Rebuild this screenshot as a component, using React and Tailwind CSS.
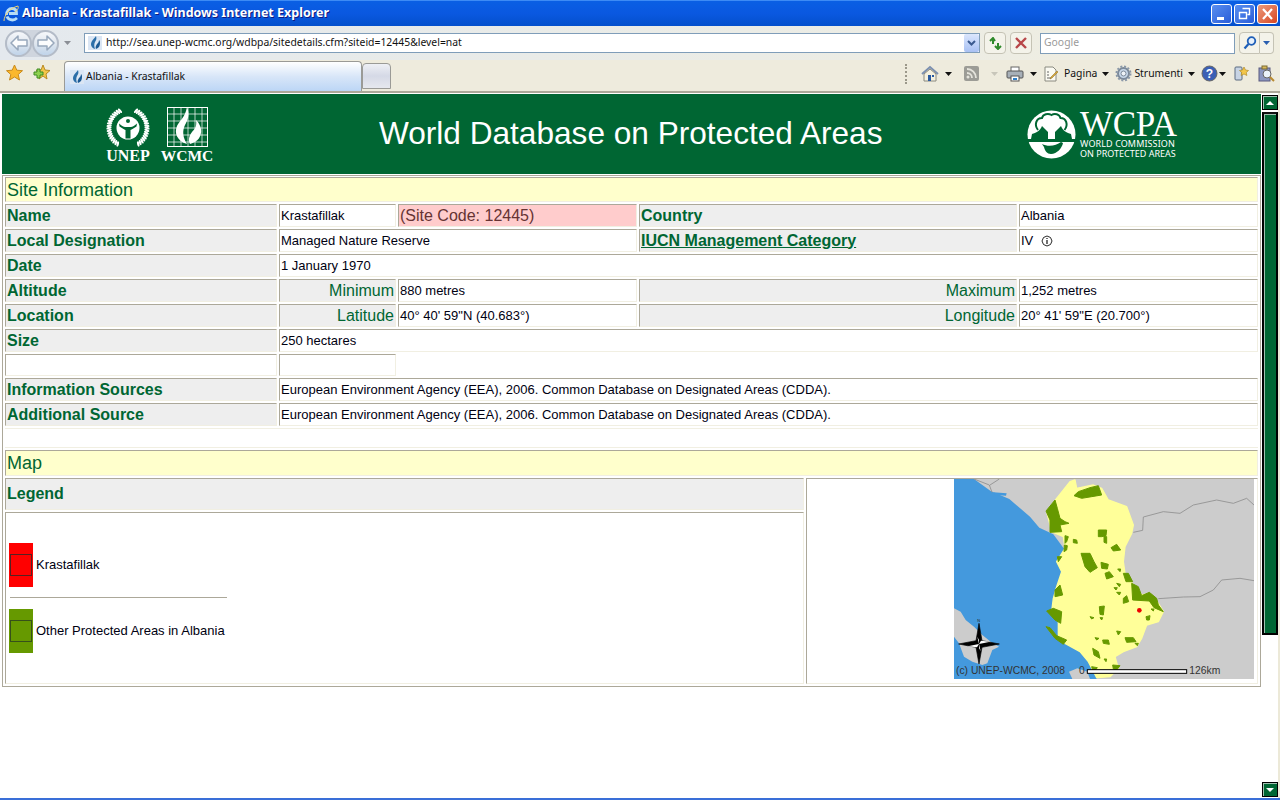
import React from "react";

const inset = "border border-t-[#aca899] border-l-[#aca899] border-r-[#f1efe2] border-b-[#f1efe2]";
const labelCell = `${inset} bg-[#eeeeee] text-[16px] font-bold text-[#006633] pl-px flex items-center h-[23px] leading-none whitespace-nowrap`;
const valueCell = `${inset} bg-white text-[13px] text-[#000011] pl-px flex items-center h-[23px] whitespace-nowrap`;
const subCell = `${inset} bg-[#eeeeee] text-[16px] text-[#006633] pr-px flex items-center justify-end h-[23px] leading-none whitespace-nowrap`;
const headCell = `${inset} bg-[#ffffcc] text-[18px] text-[#006633] pl-px flex items-center leading-none`;
const rowGrid = "grid grid-cols-[272px_117px_239px_378px_239px] gap-x-[2px]";

function Fav({ className = "" }) {
  return (
    <svg width="14" height="14" viewBox="0 0 14 14" className={className}>
      <rect width="14" height="14" fill="#dbe6f4" />
      <path d="M7 13C3 12 2 8 4 5c1-2 3-3 4-5 1 3 0 4-1 6-1 2-1 4 0 7z" fill="#2b6ea8" />
      <path d="M8 13c3-1 4-3 4-6 0-1 0-2-1-3 0 2-1 3-2 4-1 2-2 3-1 5z" fill="#1b5a94" />
    </svg>
  );
}
function Arrow({ c = "#222", w = 7 }) {
  return <svg width={w} height="4" viewBox="0 0 7 4"><path d="M0 0h7L3.500 4z" fill={c} /></svg>;
}
function NavBtn({ dir, color = "#98a8bc" }) {
  return (
    <div className="w-[27px] h-[27px] rounded-full border-2 border-[#b4bcc8] bg-gradient-to-b from-[#f6f8fb] via-[#dfe6ee] to-[#c0d4ea] flex items-center justify-center">
      <svg width="18" height="16" viewBox="0 0 18 16">
        {dir === "l"
          ? <path d="M1 8l7-7v4h9v6H8v4z" fill="#fbfcfd" stroke={color} strokeWidth="1.500" strokeLinejoin="round" />
          : <path d="M17 8l-7-7v4H1v6h9v4z" fill="#fbfcfd" stroke={color} strokeWidth="1.500" strokeLinejoin="round" />}
      </svg>
    </div>
  );
}
function WinBtn({ bg, children }) {
  return (
    <div className={`w-[21px] h-[20px] rounded-[3px] border border-white flex items-center justify-center ${bg}`}>
      <svg width="15" height="14" viewBox="0 0 15 14">{children}</svg>
    </div>
  );
}
function Star({ plus }) {
  if (plus)
    return (
      <svg width="18" height="17" viewBox="0 0 18 17">
        <path d="M10 1l2 5 5 .5-4 3.500 1 5-4-3-4 3 1-5-4-3.500 5-.5z" fill="#f3c64a" stroke="#b98a22" />
        <path d="M4 5h3v3h3v3H7v3H4v-3H1V8h3z" fill="#8fd14f" stroke="#3f8a24" />
      </svg>
    );
  return (
    <svg width="17" height="17" viewBox="0 0 17 17">
      <path d="M8.500 1l2.300 5.200 5.700.5-4.300 3.800 1.300 5.500-5-3-5 3 1.300-5.500L.500 6.700l5.700-.5z" fill="#fbb82c" stroke="#c98a1a" />
    </svg>
  );
}

function Chrome() {
  return (
    <>
      <div className="h-[26px] bg-gradient-to-b from-[#0a5fe4] via-[#0a58e0] to-[#0450cc] border-t border-[#3d8bf5] flex items-center pl-[3px] pr-[2px] shrink-0">
        <svg width="17" height="18" viewBox="0 0 17 18">
          <path d="M3.500 10c0-4 2.500-6.500 5.500-6.500s4.500 2 4.500 5H6m-2 3c1 2.500 3 3.500 5.500 3.500 2 0 3.500-1 4.500-2" fill="none" stroke="#b4dcf8" strokeWidth="2.800" />
          <path d="M1 16C1 10 7 3 15 1c1 2-1 5-3 6" fill="none" stroke="#f3d36b" strokeWidth="1" />
        </svg>
        <span className="ml-[2px] text-white font-bold text-[12.500px] font-['Noto_Sans',sans-serif] [text-shadow:1px_1px_#0f1a80] whitespace-nowrap">Albania - Krastafillak - Windows Internet Explorer</span>
        <div className="ml-auto flex gap-[2px]">
          <WinBtn bg="bg-gradient-to-br from-[#5a8ff0] to-[#2a5cd8]"><rect x="3" y="10" width="7" height="3" fill="#fff" /></WinBtn>
          <WinBtn bg="bg-gradient-to-br from-[#5a8ff0] to-[#2a5cd8]"><path d="M5.500 1.500h7v6h-2M2.500 5.500h7v6h-7z" fill="none" stroke="#fff" strokeWidth="1.400" /></WinBtn>
          <WinBtn bg="bg-gradient-to-br from-[#ea9a7c] to-[#d6431c]"><path d="M3 2l9 10M12 2L3 12" stroke="#fff" strokeWidth="2.200" /></WinBtn>
        </div>
      </div>

      <div className="h-[34px] bg-gradient-to-r from-[#e4e9ee] to-[#f0eee0] flex items-center pl-[5px] shrink-0 font-['Noto_Sans',sans-serif]">
        <div className="flex bg-[#cfd5de] rounded-full">
          <NavBtn dir="l" /><NavBtn dir="r" />
        </div>
        <div className="ml-[5px]"><Arrow c="#8b8f96" /></div>
        <div className="ml-[13px] w-[896px] h-[20px] bg-white border border-[#7f9db9] flex items-center pl-[3px]">
          <Fav />
          <span className="ml-[4px] text-[10.400px] text-[#111] whitespace-nowrap">http://sea.unep-wcmc.org/wdbpa/sitedetails.cfm?siteid=12445&amp;level=nat</span>
          <div className="ml-auto w-[15px] h-[18px] bg-gradient-to-b from-[#dbe6fc] to-[#a8c1f4] rounded-[2px] flex items-center justify-center">
            <svg width="9" height="6" viewBox="0 0 9 6"><path d="M1 1l3.500 3.500L8 1" fill="none" stroke="#3a5a90" strokeWidth="2" /></svg>
          </div>
        </div>
        <div className="ml-[4px] w-[22px] h-[22px] rounded-[4px] border border-[#c5c3b5] bg-[#f4f3ea] flex items-center justify-center">
          <svg width="15" height="13" viewBox="0 0 15 13"><path d="M5 1v6M2 4l3-3 2 3M10 12V6M7 9l3 3 3-3" fill="none" stroke="#2f8a2b" strokeWidth="2" /></svg>
        </div>
        <div className="ml-[4px] w-[22px] h-[22px] rounded-[4px] border border-[#c5c3b5] bg-[#f4f3ea] flex items-center justify-center">
          <svg width="12" height="12" viewBox="0 0 12 12"><path d="M1 1l10 10M11 1L1 11" stroke="#b8474a" strokeWidth="2.400" /></svg>
        </div>
        <div className="ml-[8px] w-[195px] h-[21px] bg-white border border-[#7f9db9] flex items-center pl-[3px] text-[10.400px] text-[#9a9a9a]">Google</div>
        <div className="ml-[4px] w-[21px] h-[22px] rounded-l-[4px] border border-[#c5c3b5] bg-[#f4f3ea] flex items-center justify-center">
          <svg width="14" height="14" viewBox="0 0 14 14"><circle cx="8.500" cy="5" r="3.800" fill="#e6f0fb" stroke="#1f5fb8" strokeWidth="1.800" /><path d="M5.500 8L1.500 12.500" stroke="#1f5fb8" strokeWidth="2.200" /></svg>
        </div>
        <div className="w-[14px] h-[22px] rounded-r-[4px] border border-l-0 border-[#c5c3b5] bg-[#f4f3ea] flex items-center justify-center"><Arrow c="#2a5fb0" /></div>
      </div>

      <div className="h-[31px] bg-[#eeebdd] flex items-end pl-[6px] shrink-0 relative font-['Noto_Sans',sans-serif] text-[10.400px] text-[#111]">
        <div className="flex items-center self-center gap-[10px] w-[58px] mt-[-7px]">
          <Star /><Star plus />
        </div>
        <div className="w-[298px] h-[30px] rounded-t-[4px] border border-b-0 border-[#9a9a96] bg-gradient-to-b from-[#ffffff] via-[#d8e6f8] to-[#bcd6f6] flex items-center pl-[5px] gap-[2px] mt-[1px]">
          <Fav /> <span>Albania - Krastafillak</span>
        </div>
        <div className="w-[29px] h-[26px] mb-[2px] rounded-t-[4px] border border-[#9a9a96] bg-gradient-to-b from-[#eef0f5] via-[#d5d9e6] to-[#e6e8ee]" />
        <div className="self-center ml-auto flex items-center mt-[-4px] h-[20px] pr-[5px]">
          <div className="w-px h-[20px] border-l-2 border-dotted border-[#9b988a] mr-[14px]" />
          <svg width="18" height="17" viewBox="0 0 18 17"><path d="M1 9l8-7 8 7" fill="none" stroke="#7c90b0" strokeWidth="2" /><path d="M3 9v7h12V9L9 4z" fill="#f5f1df" stroke="#8a8a80" /><rect x="7" y="10" width="3" height="6" fill="#2a5aa0" /><rect x="11" y="10" width="2" height="2" fill="#2a5aa0" /></svg>
          <div className="ml-[6px]"><Arrow c="#111" /></div>
          <svg className="ml-[12px]" width="15" height="15" viewBox="0 0 15 15"><rect width="15" height="15" rx="2" fill="#9c9c96" /><path d="M3 3a9 9 0 0 1 9 9M3 7a5 5 0 0 1 5 5" fill="none" stroke="#e5e4dc" strokeWidth="1.800" /><circle cx="4" cy="11" r="1.500" fill="#e5e4dc" /></svg>
          <div className="ml-[12px]"><Arrow c="#c8c6ba" /></div>
          <svg className="ml-[8px]" width="18" height="16" viewBox="0 0 18 16"><rect x="5" y="1" width="8" height="5" fill="#fff" stroke="#666" /><rect x="1" y="5" width="16" height="7" rx="1" fill="#a8b0b8" stroke="#555" /><rect x="5" y="10" width="8" height="5" fill="#fff" stroke="#555" /><rect x="7" y="12" width="4" height="2" fill="#2f7fc8" /></svg>
          <div className="ml-[6px]"><Arrow c="#111" /></div>
          <svg className="ml-[6px]" width="16" height="16" viewBox="0 0 16 16"><path d="M2 1h8l3 3v11H2z" fill="#fbfaf2" stroke="#8a8a80" /><path d="M4 6h2M4 9h2M4 12h4" stroke="#666" /><path d="M8 11l6-6 1 1-6 6-2 1z" fill="#d8a83a" stroke="#8a6a20" strokeWidth=".5" /></svg>
          <span className="ml-[5px]">Pagina</span>
          <div className="ml-[5px]"><Arrow c="#111" /></div>
          <svg className="ml-[6px]" width="17" height="17" viewBox="0 0 17 17"><circle cx="8.500" cy="8.500" r="5.500" fill="#c8d8ea" stroke="#7c8a9a" strokeWidth="2" /><circle cx="8.500" cy="8.500" r="7" fill="none" stroke="#8a98a8" strokeWidth="2" strokeDasharray="2 1.700" /><circle cx="8.500" cy="8.500" r="2.500" fill="#eef3f8" stroke="#7c8a9a" /></svg>
          <span className="ml-[2px]">Strumenti</span>
          <div className="ml-[5px]"><Arrow c="#111" /></div>
          <svg className="ml-[6px]" width="17" height="17" viewBox="0 0 17 17"><circle cx="8.500" cy="8.500" r="7.500" fill="#3b5fb5" stroke="#666" /><text x="8.500" y="13" textAnchor="middle" fontSize="12" fontWeight="700" fill="#fff" fontFamily="Liberation Sans">?</text></svg>
          <div className="ml-[1px]"><Arrow c="#111" /></div>
          <svg className="ml-[7px]" width="17" height="17" viewBox="0 0 17 17"><rect x="2" y="2" width="7" height="13" rx="1" fill="#c8d4e4" stroke="#5a6a80" /><path d="M11 2l1.500 3 3 .5-2.200 2 .6 3-2.900-1.500-2.900 1.500.6-3-2.200-2 3-.5z" fill="#f3c64a" stroke="#a8801a" strokeWidth=".6" /></svg>
          <svg className="ml-[7px]" width="18" height="17" viewBox="0 0 18 17"><rect x="2" y="3" width="11" height="13" fill="#8a96c0" stroke="#5a5a80" /><rect x="5" y="1" width="5" height="3" fill="#d8b85a" stroke="#7a6a30" /><circle cx="10" cy="9" r="4" fill="#eaf2fa" stroke="#666" /><path d="M13 12l4 4" stroke="#b88a30" strokeWidth="2" /></svg>
        </div>
      </div>
      <div className="h-[2px] bg-[#aca899] shrink-0" />
    </>
  );
}

const leaves = Array.from({ length: 18 }, (_, i) => -65 + i * 7.2);

function UnepLogo() {
  return (
    <svg width="46" height="43" viewBox="0 0 46 43">
      {[-1, 1].map((s) =>
        leaves.map((a, i) => {
          const ang = ((a + 90) * Math.PI) / 180;
          const x = 23 + s * 19 * Math.sin(ang);
          const y = 23 - 19 * Math.cos(ang);
          return <ellipse key={`${s}${i}`} cx={x} cy={y} rx="1.200" ry="2.800" fill="#fff" transform={`rotate(${s * (a + 110)} ${x} ${y})`} />;
        })
      )}
      <circle cx="23" cy="23" r="11.500" fill="#fff" />
      <circle cx="23" cy="16" r="2" fill="#006633" />
      <path d="M14 18.500c3 3 5.500 3.500 7.500 3.500h3c2 0 4.500-.5 7.500-3.500l-.5 3c-3 2-4.500 3-6 3.500v8.500h-5V25c-1.500-.5-3-1.500-6-3.500z" fill="#006633" />
    </svg>
  );
}
function WcmcLogo() {
  const ticks = [4, 11, 18, 25, 32];
  return (
    <svg width="41" height="40" viewBox="0 0 41 40">
      <rect x=".500" y=".500" width="40" height="39" fill="#006633" stroke="#fff" />
      {ticks.map((t) => <path key={t} d={`M${t + 3} 0v40M0 ${t + 3}h41`} stroke="#fff" strokeWidth=".7" />)}
      <path d="M20 37C10 34 7 26 10 19c2-5 8-8 10-19 3 7 1 13-2 18-3 6-2 13 2 19z" fill="#fff" />
      <path d="M23 37c8-2 12-8 11-15-1-4-2-6-5-9 1 6-1 9-4 12-3 4-4 8-2 12z" fill="#fff" />
    </svg>
  );
}
function WcpaLogo() {
  return (
    <svg width="49" height="49" viewBox="0 0 49 49">
      <circle cx="24.500" cy="24.500" r="24" fill="#fff" />
      <path d="M0 29h49v3H0z" fill="#006633" />
      <path d="M11 20c-4-5-2-12 4-12 1-4 6-5 9.500-3 3-2 8-1 9 3 6 0 8 7 4 12" fill="none" stroke="#006633" strokeWidth="2" />
      <path d="M5 24c4-1 8-3 10-8l6 6v7H4zM44 24c-4-1-8-3-10-8l-6 6v7h17z" fill="#006633" />
      <path d="M15 34c6 3 14 2 19-2 1 0 1 1 2 1-1 5-6 11-12 11-4 0-6-3-7-7z" fill="#006633" />
    </svg>
  );
}

function MapImage() {
  const patches = [
    "372,62 385,50 420,38 445,32 455,60 425,65 395,70",
    "288,108 315,75 322,100 330,130 345,140 357,145 330,150 335,170 300,172 300,135",
    "345,182 355,185 350,200 345,205",
    "370,193 380,195 382,205 370,203",
    "343,210 352,212 350,225 342,230",
    "322,245 335,245 325,260",
    "445,165 470,165 468,182 455,185 445,185",
    "462,182 470,185 470,205 462,202",
    "483,218 500,208 512,225 490,228",
    "393,235 420,235 432,260 442,278 420,292 405,275",
    "453,262 475,268 472,282 455,280",
    "465,295 478,290 490,305 470,312",
    "520,295 535,295 548,320 528,320",
    "503,282 512,282 510,290",
    "500,325 512,328 508,335",
    "492,338 502,338 498,345",
    "500,352 512,352 508,360",
    "520,370 530,362 536,380 520,385",
    "545,325 565,335 575,362 598,352 620,370 625,390 640,410 612,398 598,378 548,375",
    "588,425 600,422 598,435 590,435",
    "603,402 612,402 610,408",
    "315,345 330,330 338,360 315,365",
    "290,408 310,400 335,410 332,445 315,435",
    "448,395 463,393 460,420 450,418",
    "420,425 432,428 425,432",
    "450,428 458,428 455,435",
    "288,455 300,458 320,482 350,495 340,508 315,490",
    "435,488 447,490 440,495",
    "458,495 475,495 478,508 460,505",
    "500,468 512,470 505,480",
    "525,488 550,488 558,500 530,502",
    "428,520 445,530 450,550 432,540",
    "462,552 470,552 468,560",
    "425,575 442,578 430,592",
    "488,570 510,572 500,585 490,582",
    "555,505 565,505 562,512",
  ];
  return (
    <svg width="300" height="200" viewBox="12 12 900 600" className="block">
      <rect x="12" y="12" width="900" height="600" fill="#cccccc" />
      <polygon points="12,12 72,12 122,48 178,72 240,125 268,158 310,178 400,300 440,612 12,612" fill="#4499dd" />
      <polygon points="12,400 32,410 47,435 72,455 97,480 122,500 147,515 127,525 112,565 97,570 67,560 42,545 27,505 12,485" fill="#cccccc" />
      <polygon points="357,590 382,580 412,590 420,612 367,612" fill="#cccccc" />
      <polygon points="130,52 170,55 168,62 135,60" fill="#4499dd" />
      <path d="M72 12l46 18 8 22M148 12l-28 18M550 172l28-6 2-40 60-16 50 5 40-25 70-15 50 10 40-15 22 20M625 371l75-5 50-1 40-20 25-30 55-5 42 7" fill="none" stroke="#8e8e8e" strokeWidth="2.500" />
      <polygon points="375,15 380,40 430,30 455,40 475,75 530,95 550,150 545,175 525,215 520,260 525,295 550,330 575,360 600,355 625,385 640,410 625,440 590,450 575,490 560,515 520,530 495,545 505,580 480,605 440,608 415,560 390,530 345,505 325,480 325,440 305,410 310,370 320,335 335,290 320,260 345,220 340,185 305,170 290,110 320,70 360,20" fill="#ffff99" stroke="#ffff99" strokeWidth="4" strokeLinejoin="round" />
      {patches.map((p, i) => <polygon key={i} points={p} fill="#669900" stroke="#669900" strokeWidth="3" strokeLinejoin="round" />)}
      <circle cx="568" cy="406" r="7" fill="#ee0000" />
      <path d="M87 445l9 52 52 10-52 10-9 50-9-50-52-10 52-10z" fill="#000" stroke="#000" strokeWidth="2" />
      <path d="M87 507l34-7-28-3zM87 507l-34 7 28 3zM87 507l-5-22 5 10zM87 507l5 22-5-10z" fill="#fff" />
      <text x="82" y="440" fontSize="12" fill="#222" fontFamily="Liberation Sans">N</text>
      <text x="18" y="596" fontSize="31" fill="#333" fontFamily="Liberation Sans">(c) UNEP-WCMC, 2008</text>
      <text x="387" y="596" fontSize="31" fill="#333" fontFamily="Liberation Sans">0</text>
      <rect x="412" y="584" width="298" height="11" fill="#fff" stroke="#000" strokeWidth="3" />
      <text x="718" y="596" fontSize="31" fill="#333" fontFamily="Liberation Sans">126km</text>
    </svg>
  );
}

function Content() {
  return (
    <div className="w-[1262px] flex flex-col">
      <div className="h-px bg-white" />
      <div className="ml-[2px] w-[1259px] h-[80px] bg-[#006633] flex items-center">
        <div className="ml-[103px] flex gap-[8px] items-end text-white font-['Liberation_Serif',serif] font-bold leading-none w-[112px]">
          <div className="flex flex-col items-center w-[46px] shrink-0">
            <UnepLogo />
            <span className="text-[16px]">UNEP</span>
          </div>
          <div className="flex flex-col items-center w-[56px] shrink-0">
            <WcmcLogo />
            <span className="text-[15.500px] mt-px">WCMC</span>
          </div>
        </div>
        <div className="ml-[162px] w-[511px] text-[31.600px] text-white font-['Liberation_Sans',sans-serif] leading-none whitespace-nowrap">World Database on Protected Areas</div>
        <div className="ml-[137px] flex items-center">
          <WcpaLogo />
          <div className="ml-[4px] flex flex-col text-white">
            <span className="font-['Liberation_Serif',serif] text-[35px] leading-[29px] tracking-[-0.3px]">WCPA</span>
            <span className="text-[9px] leading-[10px] font-['Noto_Sans',sans-serif] whitespace-nowrap tracking-[0.1px]">WORLD COMMISSION</span>
            <span className="text-[9px] leading-[10px] font-['Noto_Sans',sans-serif] whitespace-nowrap">ON PROTECTED AREAS</span>
          </div>
        </div>
      </div>

      <div className="ml-[2px] w-[1259px] border border-[#aca899] px-[2px] pt-px pb-[2px] flex flex-col gap-y-[2px] mt-px">
        <div className={`${headCell} h-[25px]`}>Site Information</div>
        <div className={rowGrid}>
          <div className={labelCell}>Name</div>
          <div className={valueCell}>Krastafillak</div>
          <div className={`${inset} bg-[#ffcccc] text-[16px] text-[#663333] pl-px flex items-center h-[23px]`}>(Site Code: 12445)</div>
          <div className={labelCell}>Country</div>
          <div className={valueCell}>Albania</div>
        </div>
        <div className={rowGrid}>
          <div className={labelCell}>Local Designation</div>
          <div className={`${valueCell} col-span-2`}>Managed Nature Reserve</div>
          <div className={labelCell}><span className="underline">IUCN Management Category</span></div>
          <div className={valueCell}>
            IV
            <svg className="ml-[8px]" width="12" height="12" viewBox="0 0 12 12">
              <path d="M6 1l3.500 1.500L11 6 9.500 9.500 6 11 2.500 9.500 1 6l1.500-3.500z" fill="none" stroke="#111" strokeWidth=".9" />
              <path d="M6 5v4M6 3v1" stroke="#111" strokeWidth="1.200" />
            </svg>
          </div>
        </div>
        <div className={rowGrid}>
          <div className={labelCell}>Date</div>
          <div className={`${valueCell} col-span-4`}>1 January 1970</div>
        </div>
        <div className={rowGrid}>
          <div className={labelCell}>Altitude</div>
          <div className={subCell}>Minimum</div>
          <div className={valueCell}>880 metres</div>
          <div className={subCell}>Maximum</div>
          <div className={valueCell}>1,252 metres</div>
        </div>
        <div className={rowGrid}>
          <div className={labelCell}>Location</div>
          <div className={subCell}>Latitude</div>
          <div className={valueCell}>40° 40' 59"N (40.683°)</div>
          <div className={subCell}>Longitude</div>
          <div className={valueCell}>20° 41' 59"E (20.700°)</div>
        </div>
        <div className={rowGrid}>
          <div className={`${labelCell} pl-[2px]`}>Size</div>
          <div className={`${valueCell} col-span-4`}>250 hectares</div>
        </div>
        <div className={rowGrid}>
          <div className={`${inset} h-[22px]`} />
          <div className={`${inset} h-[22px]`} />
        </div>
        <div className={rowGrid}>
          <div className={labelCell}>Information Sources</div>
          <div className={`${valueCell} col-span-4`}>European Environment Agency (EEA), 2006. Common Database on Designated Areas (CDDA).</div>
        </div>
        <div className={rowGrid}>
          <div className={labelCell}>Additional Source</div>
          <div className={`${valueCell} col-span-4`}>European Environment Agency (EEA), 2006. Common Database on Designated Areas (CDDA).</div>
        </div>
        <div className="h-[20px] border-y border-[#f1efe2]" />
        <div className={`${headCell} h-[26px]`}>Map</div>
        <div className="grid grid-cols-[799px_452px] gap-x-[2px]">
          <div className="flex flex-col gap-y-[2px]">
            <div className={`${inset} bg-[#eeeeee] h-[32px] flex items-center pl-px text-[16px] font-bold text-[#006633]`}>Legend</div>
            <div className={`${inset} h-[172px] pl-[3px] pt-[30px] text-[13px] text-[#000011]`}>
              <div className="w-[218px] flex flex-col">
                <div className="flex items-center gap-[3px]">
                  <div className="w-[24px] h-[44px] bg-[#ff0000] flex items-center justify-center">
                    <div className="w-[22px] h-[22px] border border-[#552222]" />
                  </div>
                  <span>Krastafillak</span>
                </div>
                <div className="h-px bg-[#aca899] mt-[10px] ml-px" />
                <div className="flex items-center gap-[3px] mt-[11px] whitespace-nowrap">
                  <div className="w-[24px] h-[44px] bg-[#669900] flex items-center justify-center shrink-0">
                    <div className="w-[22px] h-[22px] border border-[#37501a]" />
                  </div>
                  <span>Other Protected Areas in Albania</span>
                </div>
              </div>
            </div>
          </div>
          <div className={`${inset} h-[206px] flex justify-end pr-[3px]`}>
            <MapImage />
          </div>
        </div>
      </div>
    </div>
  );
}

function Scrollbar() {
  const up = "w-0 h-0 border-x-[4px] border-x-transparent border-b-[4px] border-b-white";
  const dn = "w-0 h-0 border-x-[4px] border-x-transparent border-t-[4px] border-t-white";
  const btn = "w-[16px] h-[15px] bg-[#006633] border border-black flex items-center justify-center shadow-[inset_1px_1px_0_#9fbfae]";
  return (
    <div className="w-[16px] flex flex-col pt-[2px] pb-[1px]">
      <div className={btn}><div className={up} /></div>
      <div className="h-[523px] mt-[2px] bg-[#006633] border-2 border-black border-t-[#111] shadow-[inset_1px_1px_0_#9fbfae]" />
      <div className="flex-1" />
      <div className={btn}><div className={dn} /></div>
    </div>
  );
}

export default function App() {
  return (
    <div className="w-[1280px] h-[800px] overflow-hidden flex flex-col bg-white font-['Liberation_Sans',Arial,sans-serif]">
      <Chrome />
      <div className="flex-1 flex bg-white min-h-0">
        <Content />
        <Scrollbar />
        <div className="flex-1 bg-[#ece9d8]" />
      </div>
      <div className="h-[2px] bg-[#3a6fd8] shrink-0" />
    </div>
  );
}
